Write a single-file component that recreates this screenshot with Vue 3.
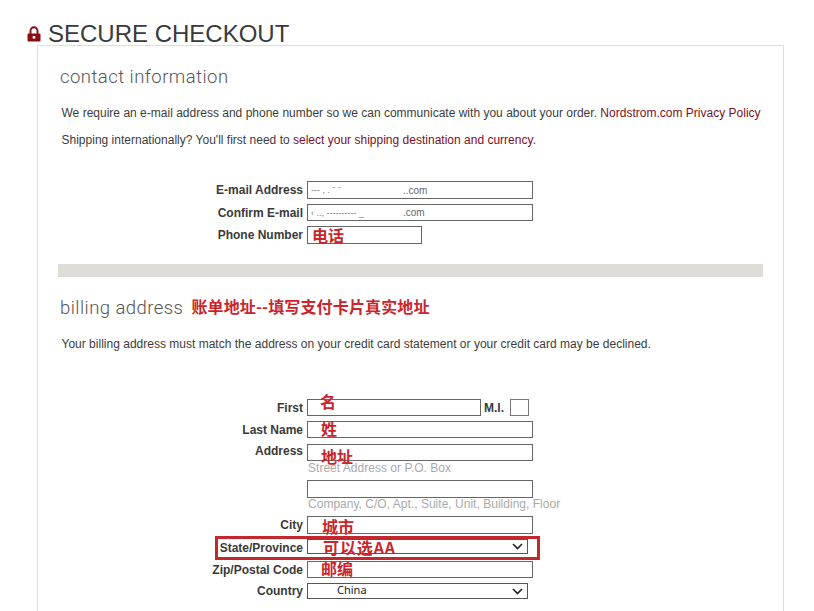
<script setup>
const intro = "We require an e-mail address and phone number so we can communicate with you about your order. ";
</script>

<template>
  <div class="page">
    <header class="top">
      <svg class="lock" width="14" height="16" viewBox="0 0 14 16" aria-hidden="true">
        <path d="M3.5 8V4.8a3.5 3.5 0 0 1 7 0V8" fill="none" stroke="#8c0a12" stroke-width="1.9" />
        <rect x="0.5" y="7.5" width="13" height="8" rx="1" fill="#8c0a12" />
        <rect x="5.7" y="10" width="2.6" height="2.6" fill="#fff" />
      </svg>
      <h1>SECURE CHECKOUT</h1>
    </header>

    <main class="card">
      <h2 class="heading">contact information</h2>
      <p class="copy">{{ intro }}<a>Nordstrom.com Privacy Policy</a></p>
      <p class="copy">Shipping internationally? You'll first need to <a>select your shipping destination and currency</a>.</p>

      <div class="row row-email">
        <label>E-mail Address</label>
        <div class="field wide h18 blur"><span class="smudge">--- ,  .    ˉ    ˉ</span><span class="dotcom">..com</span></div>
      </div>
      <div class="row row-confirm">
        <label>Confirm E-mail</label>
        <div class="field wide h17 blur"><span class="smudge">‹  .., ---------- _</span><span class="dotcom">.com</span></div>
      </div>
      <div class="row row-phone">
        <label>Phone Number</label>
        <div class="field phone h18"><span class="note note-phone">电话</span></div>
      </div>

      <div class="bar"></div>

      <h2 class="heading billing">billing address <span class="note-title">账单地址--填写支付卡片真实地址</span></h2>
      <p class="copy">Your billing address must match the address on your credit card statement or your credit card may be declined.</p>

      <div class="row row-first">
        <label>First</label>
        <div class="first-line">
          <div class="field first h17"><span class="note note-first">名</span></div>
          <span class="mi">M.I.</span>
          <div class="field mi-box h17"></div>
        </div>
      </div>
      <div class="row row-last">
        <label>Last Name</label>
        <div class="field wide h17"><span class="note note-last">姓</span></div>
      </div>
      <div class="row row-address">
        <label class="top-label">Address</label>
        <div>
          <div class="field wide h17"><span class="note note-address">地址</span></div>
          <div class="hint">Street Address or P.O. Box</div>
        </div>
      </div>
      <div class="row row-address2">
        <label></label>
        <div>
          <div class="field wide h18"></div>
          <div class="hint">Company, C/O, Apt., Suite, Unit, Building, Floor</div>
        </div>
      </div>
      <div class="row row-city">
        <label>City</label>
        <div class="field wide h18"><span class="note note-city">城市</span></div>
      </div>
      <div class="row row-state">
        <label class="state-label">State/Province</label>
        <div class="select state">
          <span class="note note-state">可以选AA</span>
          <svg width="11" height="7" viewBox="0 0 11 7" aria-hidden="true"><path d="M1 1l4.5 4.5L10 1" fill="none" stroke="#222" stroke-width="1.6" /></svg>
        </div>
        <div class="highlight"></div>
      </div>
      <div class="row row-zip">
        <label>Zip/Postal Code</label>
        <div class="field wide h17"><span class="note note-zip">邮编</span></div>
      </div>
      <div class="row row-country">
        <label>Country</label>
        <div class="select country">
          <span class="country-name">China</span>
          <svg width="11" height="7" viewBox="0 0 11 7" aria-hidden="true"><path d="M1 1l4.5 4.5L10 1" fill="none" stroke="#222" stroke-width="1.6" /></svg>
        </div>
      </div>
    </main>
  </div>
</template>

<style scoped>
.page {
  width: 814px;
  height: 611px;
  overflow: hidden;
  background: #fff;
  font-family: "Liberation Sans", Arial, sans-serif;
  color: #333;
}
.top {
  height: 45px;
  display: flex;
  align-items: flex-start;
  padding-left: 26px;
  box-sizing: border-box;
}
.lock {
  margin-top: 26px;
  margin-left: 1px;
  flex: none;
}
h1 {
  margin: 20px 0 0 7px;
  font-size: 24px;
  line-height: 28px;
  font-weight: 400;
  color: #3a3a3a;
  white-space: nowrap;
}
.card {
  margin-left: 37px;
  width: 747px;
  height: 580px;
  box-sizing: border-box;
  border: 1px solid #ddd;
}
.heading {
  margin: 19px 0 0 22px;
  font-family: Roboto, sans-serif;
  font-size: 18.5px;
  line-height: 24px;
  font-weight: 300;
  letter-spacing: 0.45px;
  color: #555;
  white-space: nowrap;
}
.copy {
  margin: 0 0 0 23.5px;
  font-size: 12px;
  line-height: 27px;
  letter-spacing: 0.008px;
  color: #3c3c3c;
  white-space: nowrap;
}
.heading + .copy {
  margin-top: 11px;
}
a {
  color: #7a0f26;
}
.row {
  position: relative;
  display: grid;
  grid-template-columns: 265px 226px;
  column-gap: 4px;
  align-items: center;
}
label {
  text-align: right;
  font-size: 12px;
  line-height: 14px;
  font-weight: 700;
  color: #3a3a3a;
  white-space: nowrap;
}
.top-label {
  align-self: start;
}
.state-label {
  position: relative;
  top: 1px;
}
.field {
  position: relative;
  box-sizing: border-box;
  border: 1px solid #666;
  background: #fff;
}
.wide { width: 226px; }
.phone { width: 115px; }
.first { width: 174px; }
.mi-box { width: 19px; border-color: #777; }
.h17 { height: 17px; }
.h18 { height: 18px; }
.blur {
  display: flex;
  align-items: center;
  font-size: 9px;
  color: #777;
  white-space: pre;
  overflow: hidden;
}
.smudge {
  width: 95px;
  padding-left: 3px;
  box-sizing: border-box;
  overflow: hidden;
}
.dotcom {
  font-size: 10px;
  color: #666;
}
.row-email { margin-top: 27px; }
.row-confirm { margin-top: 5px; }
.row-phone { margin-top: 5px; }
.bar {
  margin: 20px 0 0 20px;
  width: 705px;
  height: 13px;
  background: #e0dcd8;
}
.billing {
  margin-top: 19px;
}
.note,
.note-title {
  font-family: "Noto Sans CJK SC", sans-serif;
  font-size: 16px;
  line-height: 20px;
  font-weight: 700;
  letter-spacing: 0;
  color: #c9252b;
  white-space: nowrap;
}
.note {
  position: absolute;
}
.note-title {
  margin-left: 3px;
  letter-spacing: 0.15px;
  position: relative;
  top: -1px;
}
.note-phone { left: 4px; top: -2px; }
.note-first { left: 12px; top: -9px; }
.note-last { left: 13px; top: -4px; }
.note-address { left: 13px; top: 1px; }
.note-city { left: 14px; top: -1px; }
.note-state { left: 15px; top: -3px; letter-spacing: 0.9px; }
.note-zip { left: 13px; top: -4px; }

.row-first { margin-top: 41px; }
.first-line {
  display: flex;
  align-items: center;
}
.mi {
  margin-left: 3px;
  width: 26px;
  font-size: 12px;
  font-weight: 700;
  color: #3a3a3a;
}
.row-last { margin-top: 5px; }
.row-address { margin-top: 6px; align-items: start; }
.row-address2 { margin-top: 5px; align-items: start; }
.row-city { margin-top: 5px; }
.row-state { margin-top: 5px; }
.row-zip { margin-top: 7px; }
.row-country { margin-top: 5px; }
.hint {
  margin: 0 0 0 1px;
  font-size: 12px;
  line-height: 14px;
  letter-spacing: 0.02px;
  color: #aaa;
  white-space: nowrap;
}
.row-address2 .hint { margin-top: -1px; }
.select {
  position: relative;
  display: flex;
  align-items: center;
  justify-content: space-between;
  box-sizing: border-box;
  width: 221px;
  border: 1px solid #555;
  background: #fff;
  padding-right: 4px;
}
.select svg {
  margin-left: auto;
}
.state { height: 15px; }
.country { height: 16px; }
.country-name {
  margin-left: 29px;
  font-family: "Noto Sans", sans-serif;
  font-size: 11px;
  line-height: 12px;
  position: relative;
  top: -1px;
  color: #222;
}
.highlight {
  position: absolute;
  left: 177px;
  top: -3px;
  width: 325px;
  height: 24px;
  box-sizing: border-box;
  border: 3px solid #c4282e;
  pointer-events: none;
}
</style>
